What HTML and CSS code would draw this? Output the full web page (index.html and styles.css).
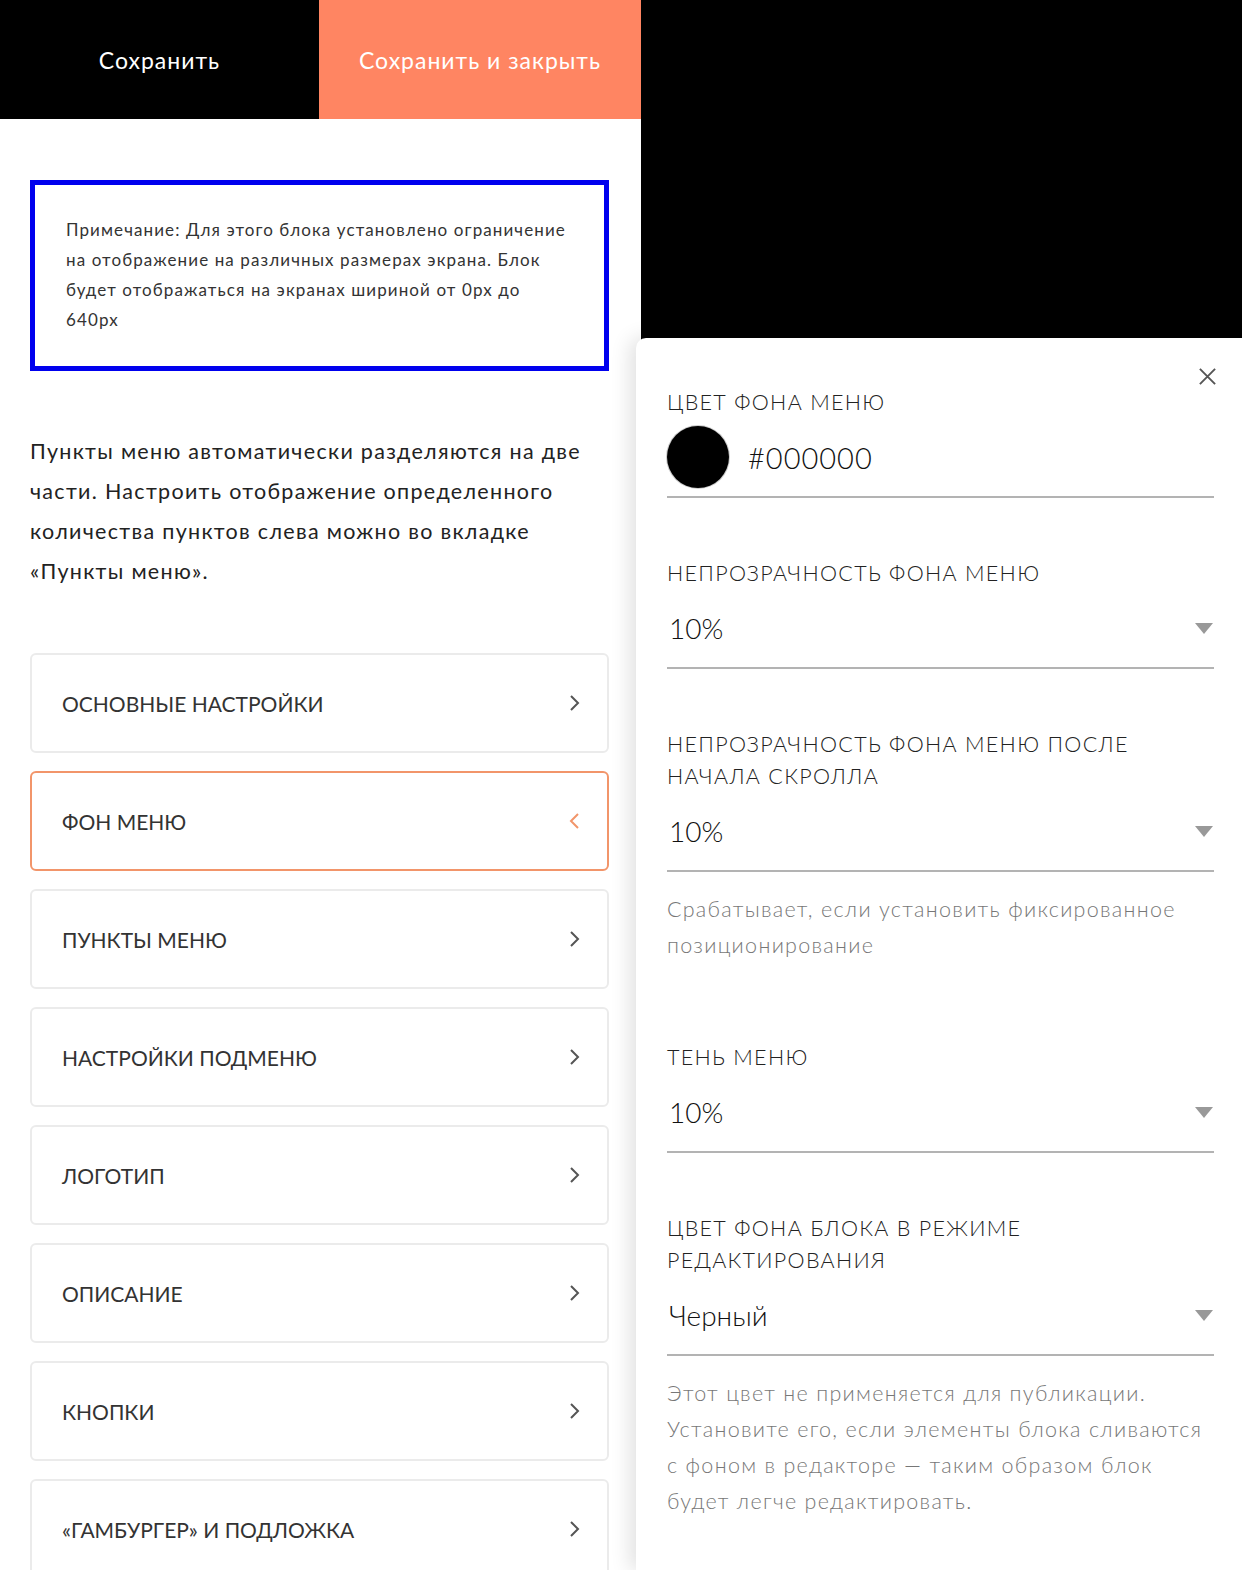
FILE: index.html
```html
<!DOCTYPE html>
<html lang="ru">
<head>
    <meta charset="UTF-8">
    <title>Настройки блока</title>
    <link rel="stylesheet" href="styles.css">
</head>
<body>
    <div class="page">
        <div class="left-col">
            <div class="top-bar">
                <button class="btn-save">Сохранить</button>
                <button class="btn-save-close">Сохранить и закрыть</button>
            </div>
            <div class="left-content">
                <div class="note">
                    Примечание: Для этого блока установлено ограничение на отображение на различных размерах экрана. Блок будет отображаться на экранах шириной от 0px до 640px
                </div>
                <p class="intro">Пункты меню автоматически разделяются на две части. Настроить отображение определенного количества пунктов слева можно во вкладке «Пункты меню».</p>
                <div class="sections">
                    <div class="section-item"><span>Основные настройки</span><svg class="chev" viewBox="0 0 12 18"><path d="M2 2 L9 9 L2 16"/></svg></div>
                    <div class="section-item active"><span>Фон меню</span><svg class="chev" viewBox="0 0 12 18"><path d="M9 2 L2 9 L9 16"/></svg></div>
                    <div class="section-item"><span>Пункты меню</span><svg class="chev" viewBox="0 0 12 18"><path d="M2 2 L9 9 L2 16"/></svg></div>
                    <div class="section-item"><span>Настройки подменю</span><svg class="chev" viewBox="0 0 12 18"><path d="M2 2 L9 9 L2 16"/></svg></div>
                    <div class="section-item"><span>Логотип</span><svg class="chev" viewBox="0 0 12 18"><path d="M2 2 L9 9 L2 16"/></svg></div>
                    <div class="section-item"><span>Описание</span><svg class="chev" viewBox="0 0 12 18"><path d="M2 2 L9 9 L2 16"/></svg></div>
                    <div class="section-item"><span>Кнопки</span><svg class="chev" viewBox="0 0 12 18"><path d="M2 2 L9 9 L2 16"/></svg></div>
                    <div class="section-item"><span>«Гамбургер» и подложка</span><svg class="chev" viewBox="0 0 12 18"><path d="M2 2 L9 9 L2 16"/></svg></div>
                </div>
            </div>
        </div>
        <div class="right-col">
            <div class="panel">
                <svg class="close" viewBox="0 0 20 20"><path d="M2 2 L18 18 M18 2 L2 18"/></svg>

                <div class="field">
                    <div class="label">Цвет фона меню</div>
                    <div class="color-row">
                        <span class="swatch"></span>
                        <span class="color-value">#000000</span>
                    </div>
                </div>

                <div class="field">
                    <div class="label">Непрозрачность фона меню</div>
                    <div class="select-row"><span>10%</span><span class="tri"></span></div>
                </div>

                <div class="field">
                    <div class="label">Непрозрачность фона меню после начала скролла</div>
                    <div class="select-row"><span>10%</span><span class="tri"></span></div>
                    <div class="hint">Срабатывает, если установить фиксированное позиционирование</div>
                </div>

                <div class="field">
                    <div class="label">Тень меню</div>
                    <div class="select-row"><span>10%</span><span class="tri"></span></div>
                </div>

                <div class="field">
                    <div class="label">Цвет фона блока в режиме редактирования</div>
                    <div class="select-row"><span>Черный</span><span class="tri"></span></div>
                    <div class="hint">Этот цвет не применяется для публикации. Установите его, если элементы блока сливаются с фоном в редакторе — таким образом блок будет легче редактировать.</div>
                </div>
            </div>
        </div>
    </div>
</body>
</html>
```

FILE: styles.css
```css
body {
    margin: 0;
    padding: 0;
    background-color: #000;
    font-family: Lato, "Noto Sans", sans-serif;
    color: #222;
}
.page {
    display: flex;
    height: 1570px;
    overflow: hidden;
}
.left-col {
    width: 641px;
    flex-shrink: 0;
    background-color: #fff;
}
.top-bar {
    display: flex;
    height: 119px;
}
.top-bar button {
    border: none;
    font-family: inherit;
    font-size: 23px;
    letter-spacing: 1px;
    color: #fff;
    cursor: pointer;
}
.btn-save {
    width: 319px;
    background-color: #000;
}
.btn-save-close {
    flex: 1;
    background-color: #ff8562;
}
.left-content {
    padding: 61px 32px 0 30px;
}
.note {
    border: 5px solid #0000ee;
    padding: 30px 34px 31px 31px;
    font-size: 17px;
    line-height: 30px;
    letter-spacing: 1.1px;
    color: #333;
}
.intro {
    margin: 60px 0 0;
    font-size: 21.5px;
    line-height: 40px;
    letter-spacing: 1.3px;
    color: #222;
}
.sections {
    margin-top: 62px;
    display: flex;
    flex-direction: column;
    gap: 18px;
}
.section-item {
    height: 96px;
    border: 2px solid #ebebeb;
    border-radius: 6px;
    display: flex;
    align-items: center;
    justify-content: space-between;
    padding: 0 26px 0 30px;
    font-size: 21px;
    text-transform: uppercase;
    color: #333;
}
.section-item.active {
    border-color: #f2956a;
}
.chev {
    width: 12px;
    height: 18px;
    fill: none;
    stroke: #555;
    stroke-width: 2;
}
.section-item.active .chev {
    stroke: #f2956a;
}
.right-col {
    flex: 1;
    padding-top: 338px;
}
.panel {
    position: relative;
    margin-left: -5px;
    height: 1232px;
    background-color: #fff;
    border-top-left-radius: 10px;
    box-shadow: -6px 0 20px rgba(0, 0, 0, 0.12);
    padding: 48px 28px 0 31px;
    box-sizing: border-box;
}
.close {
    position: absolute;
    top: 29px;
    right: 25px;
    width: 19px;
    height: 19px;
    fill: none;
    stroke: #555;
    stroke-width: 2;
}
.field {
    margin-bottom: 59px;
}
.label {
    font-size: 21.5px;
    font-weight: 300;
    line-height: 32px;
    text-transform: uppercase;
    letter-spacing: 1.3px;
    color: #222;
    padding-right: 70px;
}
.color-row {
    display: flex;
    align-items: center;
    gap: 19px;
    height: 78px;
    border-bottom: 2px solid #b3b3b3;
}
.swatch {
    width: 62px;
    height: 62px;
    border-radius: 50%;
    background-color: #000;
    box-shadow: 0 0 0 1px #ccc;
}
.color-value {
    font-size: 29px;
    font-weight: 300;
    letter-spacing: 1px;
    color: #111;
}
.select-row {
    display: flex;
    align-items: center;
    justify-content: space-between;
    height: 78px;
    border-bottom: 2px solid #b3b3b3;
    font-size: 28px;
    font-weight: 300;
    color: #111;
    padding-left: 2px;
}
.tri {
    width: 0;
    height: 0;
    border-left: 9px solid transparent;
    border-right: 9px solid transparent;
    border-top: 11px solid #999;
    margin-right: 1px;
}
.hint {
    margin-top: 19px;
    margin-bottom: 78px;
    font-size: 21.5px;
    font-weight: 300;
    line-height: 36px;
    letter-spacing: 1.3px;
    color: #777;
}
```
